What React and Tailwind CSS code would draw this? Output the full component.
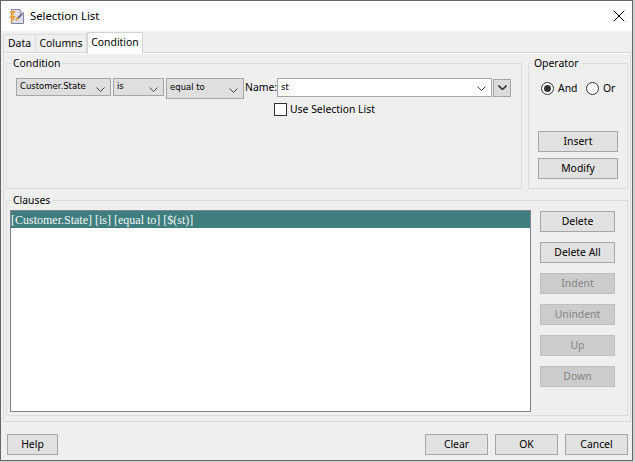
import React from 'react';
import { X } from 'lucide-react';

const btn = 'flex items-center justify-center bg-[#e1e1e1] border border-[#a6a6a6] text-black';
const disabledBtn = 'flex items-center justify-center bg-[#cccccc] border border-[#bfbfbf] text-[#838383]';

function Chevron({ className = 'w-[9px] h-[5px]', stroke = '#444', width = 1 }) {
  return (
    <svg viewBox="0 0 9 5" className={className} fill="none" stroke={stroke} strokeWidth={width}>
      <path d="M0.5 0.5 L4.5 4.5 L8.5 0.5" />
    </svg>
  );
}

function Select({ label, className }) {
  return (
    <div className={`flex items-start justify-between bg-[#dfdfdf] border border-[#a6a6a6] pl-[3px] pr-[5px] text-[8.5px] font-['DejaVu_Sans'] ${className}`}>
      <span>{label}</span>
      <Chevron className="w-[9px] h-[5px] mt-[5px]" />
    </div>
  );
}

function AppIcon() {
  return (
    <svg viewBox="0 0 16 16" className="w-[16px] h-[16px]">
      <path d="M2.5 1.5 H11 L14.5 5 V15.5 H2.5 Z" fill="#dedeee" stroke="#85859f" strokeWidth="1" />
      <path d="M11 1.5 V5 H14.5" fill="#f4f4fa" stroke="#85859f" strokeWidth="1" />
      <path d="M1 4 L5 4 L2 9 L5 9 L2 14" fill="none" stroke="#f3a33a" strokeWidth="2" />
      <path d="M7 12 L13 6" stroke="#6e6e8a" strokeWidth="2" />
      <path d="M7 12 L9 10" stroke="#eeb04a" strokeWidth="2" />
    </svg>
  );
}

function Radio({ checked, label, className }) {
  return (
    <div className={`flex items-center gap-[4px] ${className}`}>
      <div className="w-[13px] h-[13px] rounded-full border border-[#333] bg-white flex items-center justify-center shrink-0">
        {checked && <div className="w-[7px] h-[7px] rounded-full bg-[#333]" />}
      </div>
      <span>{label}</span>
    </div>
  );
}

export default function App() {
  return (
    <div className="w-[635px] h-[462px] bg-[#d0d0d0] overflow-hidden font-['Noto_Sans',sans-serif] text-[10.4px] leading-none text-black">
      <div className="w-[633px] h-[461px] bg-[#efefef] border border-[#666] flex flex-col">
        {/* title bar */}
        <div className="h-[30px] bg-white flex items-center shrink-0 pl-[8px] pr-[3px]">
          <AppIcon />
          <span className="ml-[5px] text-[11.3px]">Selection List</span>
          <X className="ml-auto w-[20px] h-[20px] -mt-px" strokeWidth={1.2} />
        </div>

        {/* tabs */}
        <div className="flex items-end h-[21px] pl-[2px] shrink-0">
          <div className="h-[18px] w-[33px] border border-b-0 border-[#dcdcdc] flex items-center justify-center">Data</div>
          <div className="h-[18px] w-[51px] border border-b-0 border-l-0 border-[#dcdcdc] flex items-center justify-center">Columns</div>
          <div className="h-[22px] w-[56px] border border-b-0 border-[#d4d4d4] bg-white flex items-center justify-center pb-[2px] -mb-[2px] relative z-10">Condition</div>
        </div>

        {/* tab content */}
        <div className="ml-[2px] w-[628px] h-[370px] border border-[#d9d9d9] shadow-[inset_0_1px_0_#ffffff] shrink-0 px-[2px] pt-[3px]">
          <div className="flex gap-[6px] h-[138px]">
            <fieldset className="w-[516px] h-[132px] mt-[1px] border border-[#dcdcdc] pl-[9px]">
              <legend className="-ml-[5px] px-[2px] leading-[12px]">Condition</legend>
              <div className="flex items-start gap-[2px] mt-[9px]">
                <Select label="Customer.State" className="w-[95px] h-[18px] pt-[3px]" />
                <Select label="is" className="w-[51px] h-[18px] pt-[3px]" />
                <Select label="equal to" className="w-[78px] h-[21px] pt-[4px]" />
                <span className="-ml-px mt-[4px] w-[31px] shrink-0">Name:</span>
                <div className="-ml-px w-[215px] h-[19px] bg-white border border-[#a6a6a6] flex items-center justify-between pl-[3px] pr-[5px]">
                  <span className="text-[8.5px] font-['DejaVu_Sans']">st</span>
                  <Chevron className="w-[9px] h-[5px] mt-[2px]" />
                </div>
                <div className="-ml-px w-[18px] h-[18px] mt-px bg-[#dcdcdc] border border-[#a6a6a6] flex items-center justify-center">
                  <Chevron className="w-[9px] h-[5px] -mt-px" stroke="#333" width={1.6} />
                </div>
              </div>
              <div className="flex items-center ml-[258px] mt-[4px]">
                <div className="w-[13px] h-[13px] border border-[#333] bg-white" />
                <span className="ml-[3px]">Use Selection List</span>
              </div>
            </fieldset>
            <fieldset className="w-[100px] h-[132px] mt-[1px] border border-[#dcdcdc] pl-[9px]">
              <legend className="-ml-[6px] px-[2px] leading-[12px]">Operator</legend>
              <div className="flex items-center ml-[3px] mt-[13px]">
                <Radio checked label="And" className="w-[45px]" />
                <Radio label="Or" />
              </div>
              <div className={`${btn} w-[80px] h-[21px] mt-[36px]`}>Insert</div>
              <div className={`${btn} w-[80px] h-[21px] mt-[6px]`}>Modify</div>
            </fieldset>
          </div>

          <fieldset className="w-[622px] h-[222px] border border-[#dcdcdc] pl-[3px]">
            <legend className="ml-px px-[2px] leading-[12px]">Clauses</legend>
            <div className="flex">
              <div className="w-[521px] h-[202px] mt-[4px] bg-white border border-[#82828c] font-['Liberation_Serif',serif] text-[12px] text-[#f4f8f8]">
                <div className="h-[17px] bg-[#3f7e7e] flex items-center">[Customer.State] [is] [equal to] [$(st)]</div>
              </div>
              <div className="ml-[9px] flex flex-col gap-[10px] w-[75px] mt-[5px]">
                <div className={`${btn} h-[21px]`}>Delete</div>
                <div className={`${btn} h-[21px]`}>Delete All</div>
                <div className={`${disabledBtn} h-[21px]`}>Indent</div>
                <div className={`${disabledBtn} h-[21px]`}>Unindent</div>
                <div className={`${disabledBtn} h-[21px]`}>Up</div>
                <div className={`${disabledBtn} h-[21px]`}>Down</div>
              </div>
            </div>
          </fieldset>
        </div>

        {/* footer */}
        <div className="flex items-start pt-[12px] pl-[6px]">
          <div className={`${btn} w-[51px] h-[21px]`}>Help</div>
          <div className={`${btn} w-[63px] h-[21px] ml-auto`}>Clear</div>
          <div className={`${btn} w-[63px] h-[21px] ml-[7px]`}>OK</div>
          <div className={`${btn} w-[63px] h-[21px] ml-[7px] mr-[4px]`}>Cancel</div>
        </div>
      </div>
    </div>
  );
}
